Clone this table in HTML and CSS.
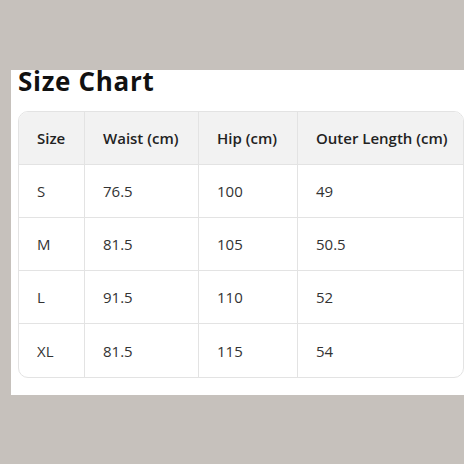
FILE: index.html
```html
<!DOCTYPE html>
<html>
<head>
<meta charset="utf-8">
<link rel="stylesheet" href="styles.css">
</head>
<body>
<div class="panel">
  <h2 class="title">Size Chart</h2>
  <table class="chart">
    <colgroup>
      <col class="c1"><col class="c2"><col class="c3"><col class="c4">
    </colgroup>
    <thead>
      <tr><th>Size</th><th>Waist (cm)</th><th>Hip (cm)</th><th>Outer Length (cm)</th></tr>
    </thead>
    <tbody>
      <tr><td>S</td><td>76.5</td><td>100</td><td>49</td></tr>
      <tr><td>M</td><td>81.5</td><td>105</td><td>50.5</td></tr>
      <tr><td>L</td><td>91.5</td><td>110</td><td>52</td></tr>
      <tr><td>XL</td><td>81.5</td><td>115</td><td>54</td></tr>
    </tbody>
  </table>
</div>
</body>
</html>
```

FILE: styles.css
```css
html, body {
  margin: 0;
  padding: 0;
  background: #c6c1bc;
  overflow: hidden;
  width: 464px;
  height: 464px;
}
body {
  padding-top: 70px;
  padding-left: 11px;
  box-sizing: border-box;
}
.panel {
  background: #ffffff;
  width: 470px;
  padding: 0 0 17px 7px;
  box-sizing: border-box;
}
.title {
  margin: 0;
  height: 41px;
  font-family: "Open Sans", sans-serif;
  font-weight: 700;
  font-size: 26px;
  line-height: 22px;
  color: #111;
  letter-spacing: 0.7px;
}
.chart {
  width: 446px;
  table-layout: fixed;
  border-collapse: separate;
  border-spacing: 0;
  border: 1px solid #e3e3e3;
  border-radius: 10px;
  overflow: hidden;
  font-family: "Open Sans", sans-serif;
  font-size: 15px;
  color: #333;
}
.c1 { width: 66px; }
.c2 { width: 114px; }
.c3 { width: 99px; }
.c4 { width: auto; }
.chart th, .chart td {
  height: 53px;
  padding: 0 0 0 18px;
  text-align: left;
  border-right: 1px solid #e3e3e3;
  border-bottom: 1px solid #e3e3e3;
  box-sizing: border-box;
}
.chart th:last-child, .chart td:last-child { border-right: none; }
.chart tbody tr:last-child td { border-bottom: none; }
.chart th {
  background: #f2f2f2;
  font-weight: 600;
  color: #222;
}
```
